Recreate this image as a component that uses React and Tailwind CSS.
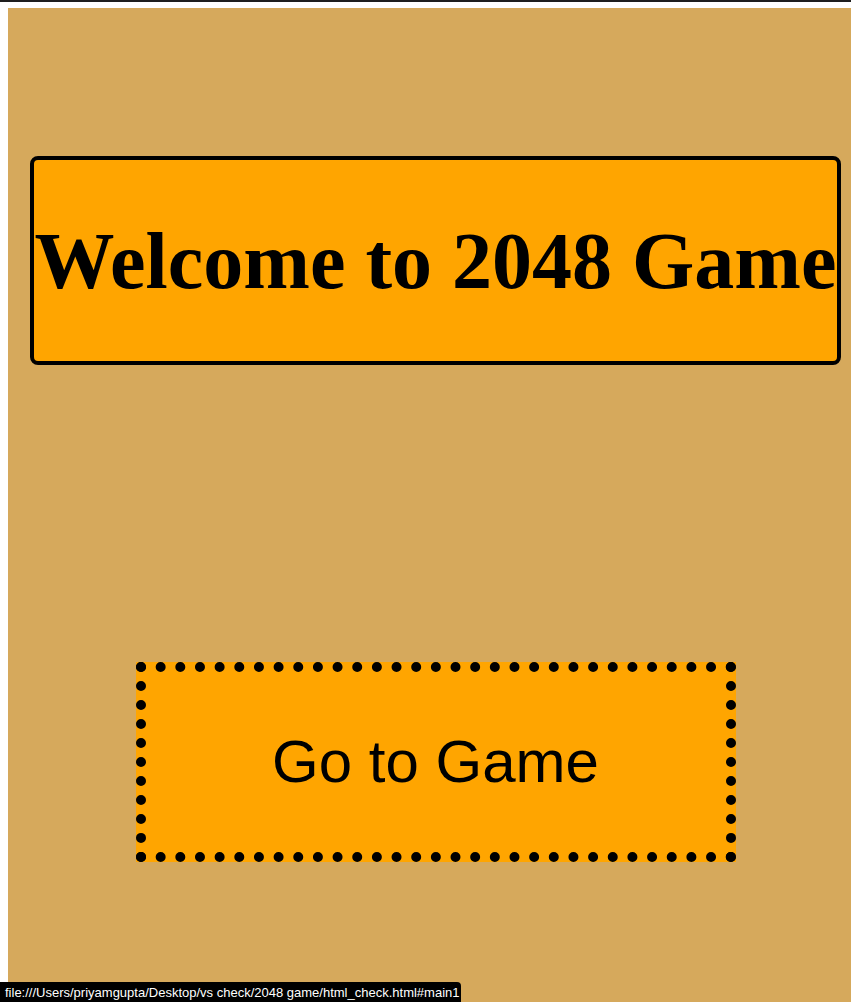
import React from "react";

export default function App() {
  return (
    <div className="relative w-[851px] h-[1002px] overflow-hidden bg-white">
      <div className="h-[2px] bg-[#1e1e1e]" />
      <div className="pt-[6px] pl-[8px]">
        <div className="w-[855px] h-[1100px] bg-[#D6A95C] px-[22px] pt-[148px]">
          <div className="h-[209px] w-full border-4 border-black rounded-[8px] bg-[#FFA500] flex items-center justify-center">
            <h1
              className="text-[80px] font-bold text-black leading-none whitespace-nowrap"
              style={{ fontFamily: '"Liberation Serif", "Times New Roman", serif' }}
            >
              Welcome to 2048 Game
            </h1>
          </div>
          <div className="mt-[297px] mx-auto w-[600px] h-[200px] border-[10px] border-dotted border-black bg-[#FFA500] flex items-center justify-center">
            <span
              className="text-[60px] text-black leading-none whitespace-nowrap"
              style={{ fontFamily: '"Liberation Sans", Arial, sans-serif' }}
            >
              Go to Game
            </span>
          </div>
        </div>
      </div>
      <div className="absolute left-0 bottom-0 h-[20px] w-[461px] bg-black rounded-tr-[4px] flex items-center pl-[5px]">
        <span
          className="text-[13px] text-white whitespace-nowrap leading-none"
          style={{ fontFamily: '"Liberation Sans", Arial, sans-serif' }}
        >
          file:///Users/priyamgupta/Desktop/vs check/2048 game/html_check.html#main1
        </span>
      </div>
    </div>
  );
}
